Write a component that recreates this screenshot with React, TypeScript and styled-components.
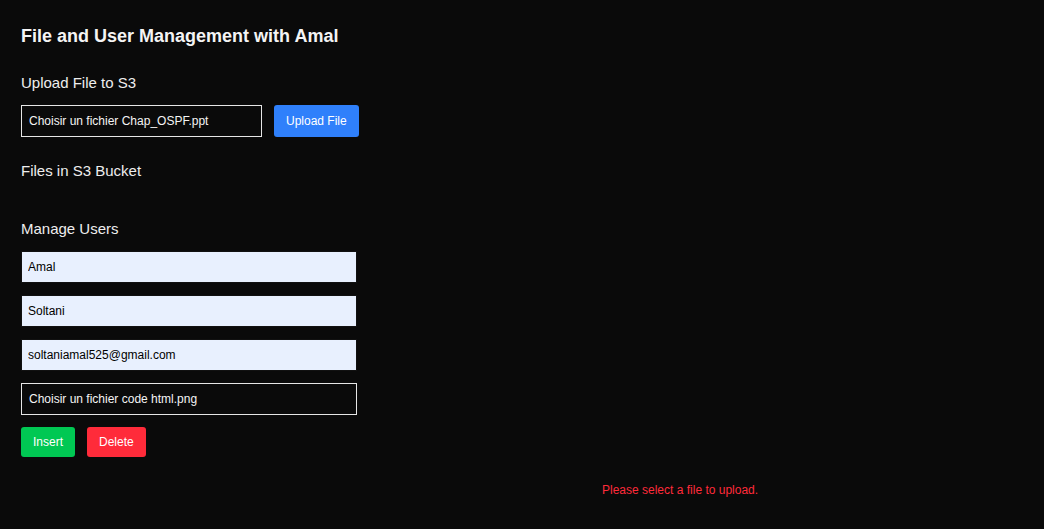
import React from "react";
import styled, { createGlobalStyle } from "styled-components";

const Global = createGlobalStyle`
  html, body {
    margin: 0;
    padding: 0;
    background: #0a0a0a;
  }
  body {
    font-family: "Liberation Sans", Arial, sans-serif;
    color: #f2f2f2;
  }
  * { box-sizing: border-box; }
`;

const Page = styled.div`
  min-height: 529px;
  padding: 26px 21px 0 21px;
  display: flex;
  flex-direction: column;
`;

const Title = styled.h1`
  margin: 0;
  font-size: 18px;
  line-height: 20px;
  font-weight: 700;
  color: #f4f4f4;
`;

const Heading = styled.h2<{ $gap: number }>`
  margin: ${(p) => p.$gap}px 0 0 0;
  font-size: 15px;
  line-height: 18px;
  font-weight: 400;
  color: #eeeeee;
`;

const Row = styled.div`
  margin-top: 13px;
  display: flex;
  align-items: center;
  gap: 12px;
`;

const FileBox = styled.div<{ $width: number }>`
  width: ${(p) => p.$width}px;
  height: 32px;
  border: 1px solid #e6e6e6;
  padding: 0 7px;
  display: flex;
  align-items: center;
  font-size: 12px;
  color: #f4f4f4;
  white-space: nowrap;
`;

const Button = styled.button<{ $bg: string; $tall?: boolean }>`
  height: ${(p) => (p.$tall ? 32 : 30)}px;
  padding: 0 12px;
  border: none;
  border-radius: 3px;
  background: ${(p) => p.$bg};
  color: #ffffff;
  font-family: "Liberation Sans", Arial, sans-serif;
  font-size: 12px;
  cursor: pointer;
`;

const Form = styled.div`
  margin-top: 13px;
  display: flex;
  flex-direction: column;
  gap: 12px;
  width: 336px;
`;

const TextInput = styled.input`
  width: 336px;
  height: 32px;
  border: 1px solid #111111;
  background: #e8f0fe;
  color: #000000;
  padding: 0 6px;
  font-family: "Liberation Sans", Arial, sans-serif;
  font-size: 12px;
  outline: none;
`;

const Actions = styled.div`
  display: flex;
  gap: 12px;
`;

const Message = styled.p`
  margin: 26px 0 0 581px;
  font-size: 12px;
  line-height: 14px;
  color: #ff2b3a;
`;

export default function App() {
  return (
    <>
      <Global />
      <Page>
        <Title>File and User Management with Amal</Title>
        <Heading $gap={28}>Upload File to S3</Heading>
        <Row>
          <FileBox $width={241}>Choisir un fichier Chap_OSPF.ppt</FileBox>
          <Button $bg="#2f80fb" $tall>Upload File</Button>
        </Row>
        <Heading $gap={25}>Files in S3 Bucket</Heading>
        <Heading $gap={40}>Manage Users</Heading>
        <Form>
          <TextInput defaultValue="Amal" readOnly />
          <TextInput defaultValue="Soltani" readOnly />
          <TextInput defaultValue="soltaniamal525@gmail.com" readOnly />
          <FileBox $width={336}>Choisir un fichier code html.png</FileBox>
          <Actions>
            <Button $bg="#00c853">Insert</Button>
            <Button $bg="#ff2b3a">Delete</Button>
          </Actions>
        </Form>
        <Message>Please select a file to upload.</Message>
      </Page>
    </>
  );
}
